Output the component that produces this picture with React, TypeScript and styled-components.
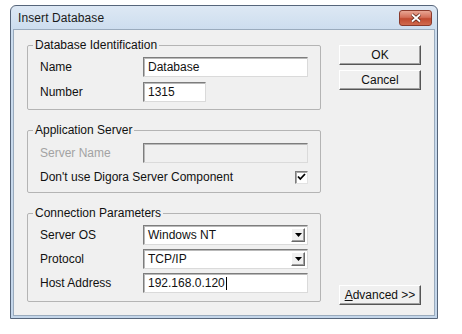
import styled, { createGlobalStyle } from "styled-components";

const GlobalStyle = createGlobalStyle`
  body {
    margin: 0;
    background: #ffffff;
    font-family: "Liberation Sans", Arial, sans-serif;
    font-size: 12px;
    color: #111;
  }
`;

const Window = styled.div`
  margin: 5px 0 0 10px;
  width: 428px;
  height: 314px;
  box-sizing: border-box;
  border: 1px solid #56657a;
  border-radius: 6px 6px 0 0;
  background: linear-gradient(#dde8f4, #cbdcee 26px, #c4d6ea);
  padding: 0 2px 2px;
  display: flex;
  flex-direction: column;
`;

const TitleBar = styled.div`
  height: 23px;
  display: flex;
  align-items: center;
  justify-content: space-between;
  padding: 0 3px 0 5px;
`;

const Title = styled.span`
  font-size: 12px;
  color: #1a1a1a;
  letter-spacing: 0.1px;
`;

const CloseButton = styled.div`
  width: 33px;
  height: 16px;
  box-sizing: border-box;
  border: 1px solid #8a3a2c;
  border-radius: 3px;
  background: linear-gradient(#e8a593, #d4705a 45%, #c04a30 55%, #d06a4e);
  display: flex;
  align-items: center;
  justify-content: center;
`;

const Client = styled.div`
  flex: 1;
  background: #f0f0f0;
  border: 1px solid #9aabbd;
  padding: 8px 0 10px 13px;
  display: flex;
  gap: 18px;
`;

const LeftColumn = styled.div`
  width: 294px;
  display: flex;
  flex-direction: column;
  gap: 13px;
`;

const RightColumn = styled.div`
  width: 82px;
  padding-top: 7px;
  display: flex;
  flex-direction: column;
  gap: 5px;
`;

const Group = styled.fieldset<{ $top: number; $bottom: number }>`
  margin: 0;
  border: 1px solid #b4b4b4;
  border-radius: 2px;
  padding: ${(p) => p.$top}px 0 ${(p) => p.$bottom}px 0;
  display: flex;
  flex-direction: column;
`;

const Legend = styled.legend`
  margin-left: 5px;
  padding: 0 2px;
  font-size: 12px;
  line-height: 14px;
  color: #111;
`;

const Rows = styled.div<{ $gap: number }>`
  display: flex;
  flex-direction: column;
  gap: ${(p) => p.$gap}px;
`;

const Row = styled.div`
  display: grid;
  grid-template-columns: 103px 165px;
  align-items: center;
  padding-left: 12px;
  height: 20px;
`;

const CheckRow = styled.div`
  display: flex;
  align-items: center;
  justify-content: space-between;
  width: 268px;
  padding-left: 12px;
  height: 20px;
`;

const Label = styled.span<{ $disabled?: boolean }>`
  color: ${(p) => (p.$disabled ? "#a3a3a3" : "#111")};
`;

const Field = styled.div<{ $width?: number; $disabled?: boolean }>`
  width: ${(p) => p.$width ?? 165}px;
  height: 20px;
  box-sizing: border-box;
  border: 1px solid;
  border-color: #7d7d7d #dadada #dadada #7d7d7d;
  box-shadow: inset 1px 1px 0 #b9b9b9;
  background: ${(p) => (p.$disabled ? "#f0f0f0" : "#ffffff")};
  display: flex;
  align-items: center;
  padding-left: 4px;
  color: #111;
`;

const Caret = styled.span`
  display: inline-block;
  width: 1px;
  height: 13px;
  background: #000;
  margin-left: 1px;
`;

const DropButton = styled.div`
  margin-left: auto;
  margin-right: 2px;
  width: 14px;
  height: 14px;
  box-sizing: border-box;
  background: #f0f0f0;
  border: 1px solid;
  border-color: #ffffff #696969 #696969 #ffffff;
  box-shadow: inset -1px -1px 0 #a0a0a0;
  display: flex;
  align-items: center;
  justify-content: center;
`;

const CheckBox = styled.div`
  width: 13px;
  height: 13px;
  box-sizing: border-box;
  border: 1px solid;
  border-color: #7d7d7d #e2e2e2 #e2e2e2 #7d7d7d;
  box-shadow: inset 1px 1px 0 #a8a8a8;
  background: #ffffff;
  display: flex;
  align-items: center;
  justify-content: center;
`;

const Button = styled.div<{ $push?: boolean }>`
  width: 82px;
  height: 20px;
  box-sizing: border-box;
  margin-top: ${(p) => (p.$push ? "auto" : "0")};
  background: #f0f0f0;
  border: 1px solid;
  border-color: #ffffff #555555 #555555 #ffffff;
  box-shadow: inset -1px -1px 0 #a0a0a0;
  display: flex;
  align-items: center;
  justify-content: center;
  color: #111;
`;

const Underline = styled.span`
  text-decoration: underline;
`;

const Arrow = () => (
  <svg width="7" height="4" viewBox="0 0 7 4">
    <path d="M0 0h7L3.5 4z" fill="#000" />
  </svg>
);

const Select = ({ value }: { value: string }) => (
  <Field>
    {value}
    <DropButton>
      <Arrow />
    </DropButton>
  </Field>
);

export default function App() {
  return (
    <>
      <GlobalStyle />
      <Window>
        <TitleBar>
          <Title>Insert Database</Title>
          <CloseButton>
            <svg width="12" height="10" viewBox="0 0 12 10">
              <path d="M2 1.5l8 7M10 1.5l-8 7" stroke="#5a2418" strokeWidth="3.4" />
              <path d="M2 1.5l8 7M10 1.5l-8 7" stroke="#ffffff" strokeWidth="1.8" />
            </svg>
          </CloseButton>
        </TitleBar>
        <Client>
          <LeftColumn>
            <Group $top={5} $bottom={7}>
              <Legend>Database Identification</Legend>
              <Rows $gap={5}>
                <Row>
                  <Label>Name</Label>
                  <Field>Database</Field>
                </Row>
                <Row>
                  <Label>Number</Label>
                  <Field $width={63}>1315</Field>
                </Row>
              </Rows>
            </Group>
            <Group $top={6} $bottom={5}>
              <Legend>Application Server</Legend>
              <Rows $gap={4}>
                <Row>
                  <Label $disabled>Server Name</Label>
                  <Field $disabled />
                </Row>
                <CheckRow>
                  <Label>Don't use Digora Server Component</Label>
                  <CheckBox>
                    <svg width="9" height="8" viewBox="0 0 9 8">
                      <path d="M1 3.5l2.3 2.5L8 1" stroke="#000" strokeWidth="1.8" fill="none" />
                    </svg>
                  </CheckBox>
                </CheckRow>
              </Rows>
            </Group>
            <Group $top={5} $bottom={8}>
              <Legend>Connection Parameters</Legend>
              <Rows $gap={4}>
                <Row>
                  <Label>Server OS</Label>
                  <Select value="Windows NT" />
                </Row>
                <Row>
                  <Label>Protocol</Label>
                  <Select value="TCP/IP" />
                </Row>
                <Row>
                  <Label>Host Address</Label>
                  <Field>
                    192.168.0.120
                    <Caret />
                  </Field>
                </Row>
              </Rows>
            </Group>
          </LeftColumn>
          <RightColumn>
            <Button>OK</Button>
            <Button>Cancel</Button>
            <Button $push>
              <Underline>A</Underline>dvanced &gt;&gt;
            </Button>
          </RightColumn>
        </Client>
      </Window>
    </>
  );
}
